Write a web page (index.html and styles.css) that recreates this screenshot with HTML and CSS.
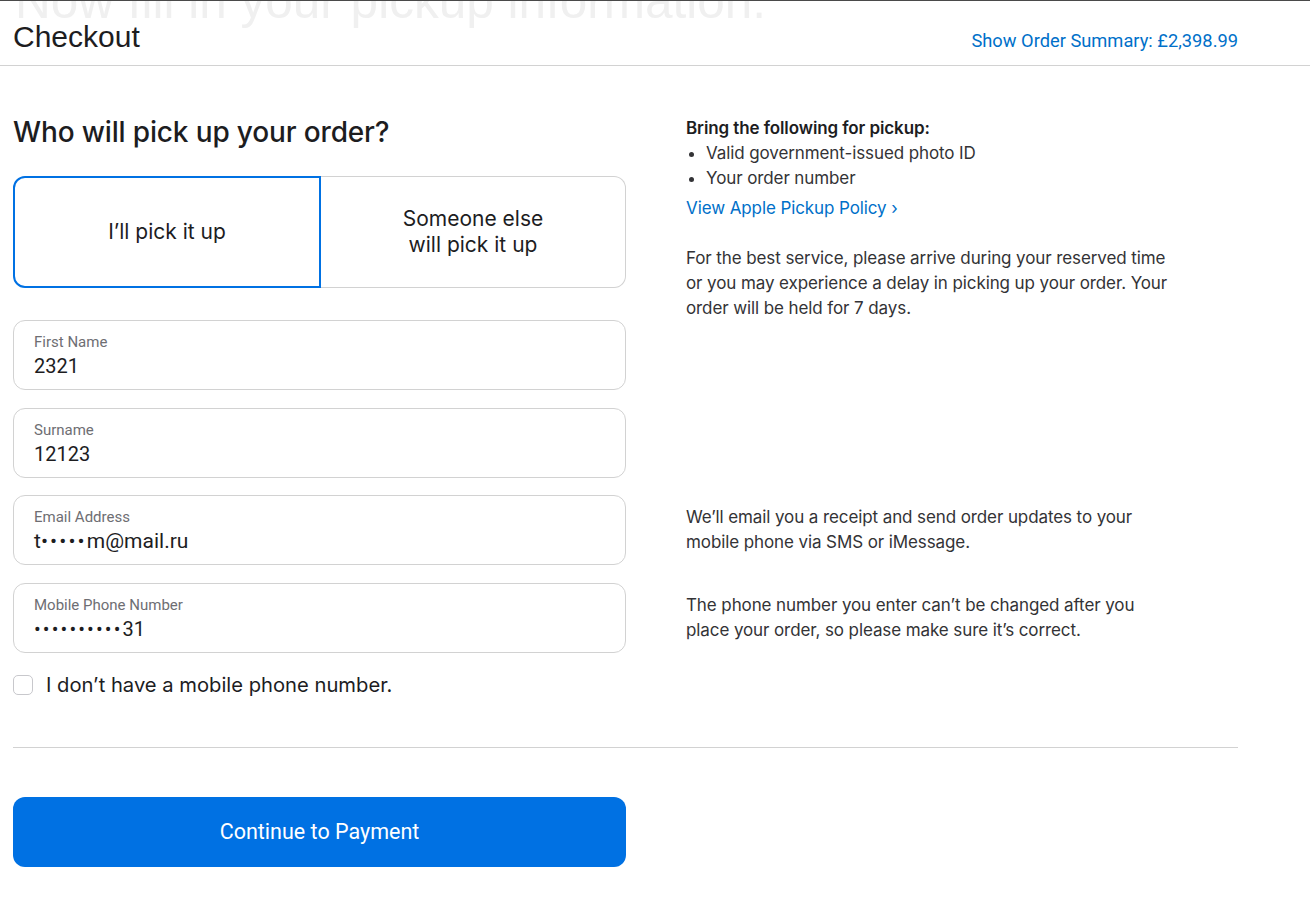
FILE: index.html
```html
<!DOCTYPE html>
<html lang="en">
<head>
<meta charset="utf-8">
<title>Checkout</title>
<link rel="stylesheet" href="styles.css">
</head>
<body>
<header class="topbar">
  <div class="ghost-title">Now fill in your pickup information.</div>
  <h1 class="brand">Checkout</h1>
  <a class="summary-link" href="#">Show Order Summary: £2,398.99</a>
</header>
<main class="checkout">
  <section class="pick-block">
    <h2 class="section-title">Who will pick up your order?</h2>
    <div class="toggle">
      <div class="toggle-opt is-selected">I’ll pick it up</div>
      <div class="toggle-opt">Someone else<br>will pick it up</div>
    </div>
  </section>
  <aside class="pickup-info">
    <p class="info-title">Bring the following for pickup:</p>
    <ul class="info-list">
      <li>Valid government-issued photo ID</li>
      <li>Your order number</li>
    </ul>
    <a class="info-link" href="#">View Apple Pickup Policy ›</a>
    <p class="info-text">For the best service, please arrive during your reserved time or you may experience a delay in picking up your order. Your order will be held for 7 days.</p>
  </aside>
  <div class="field field-first">
    <span class="field-label">First Name</span>
    <span class="field-value">2321</span>
  </div>
  <div class="field">
    <span class="field-label">Surname</span>
    <span class="field-value">12123</span>
  </div>
  <div class="field field-left">
    <span class="field-label">Email Address</span>
    <span class="field-value field-email">t<span class="mask">•••••</span>m@mail.ru</span>
  </div>
  <p class="note">We’ll email you a receipt and send order updates to your mobile phone via SMS or iMessage.</p>
  <div class="field field-left">
    <span class="field-label">Mobile Phone Number</span>
    <span class="field-value"><span class="mask">••••••••••</span>31</span>
  </div>
  <p class="note">The phone number you enter can’t be changed after you place your order, so please make sure it’s correct.</p>
  <label class="check-row">
    <span class="checkbox"></span>
    <span class="check-text">I don’t have a mobile phone number.</span>
  </label>
  <hr class="divider">
  <button class="pay-btn" type="button">Continue to Payment</button>
</main>
</body>
</html>
```
FILE: styles.css
```css
* { box-sizing: border-box; }
html, body { margin: 0; padding: 0; background: #fff; }
body {
  border-top: 1px solid #4a4a4a;
  font-family: "Inter", "Liberation Sans", sans-serif;
  color: #1d1d1f;
  overflow: hidden;
}
.topbar {
  position: relative;
  height: 65px;
  border-bottom: 1px solid #d2d2d2;
  padding: 19px 72px 0 13px;
  display: flex;
  justify-content: space-between;
  align-items: baseline;
}
.ghost-title {
  position: absolute;
  left: 15px;
  top: -29px;
  font-family: "Liberation Sans", sans-serif;
  font-size: 49.5px;
  color: #f0f0f0;
  white-space: nowrap;
  pointer-events: none;
}
.brand {
  position: relative;
  margin: 0;
  font-family: "Liberation Sans", sans-serif;
  font-weight: 400;
  font-size: 30px;
  line-height: 34px;
  color: #1d1d1f;
}
.summary-link {
  position: relative;
  font-family: "Roboto", "Liberation Sans", sans-serif;
  font-size: 18.3px;
  color: #0070c9;
  text-decoration: none;
}
.checkout {
  display: grid;
  grid-template-columns: 613px 1fr;
  column-gap: 60px;
  padding: 50px 72px 0 13px;
  align-items: start;
}
.pick-block { grid-column: 1; grid-row: 1; }
.section-title {
  margin: 0;
  font-size: 28px;
  font-weight: 500;
  line-height: 32px;
  letter-spacing: -0.15px;
  color: #1d1d1f;
}
.toggle {
  display: flex;
  margin-top: 28px;
  height: 112px;
}
.toggle-opt {
  flex: 1;
  display: flex;
  align-items: center;
  justify-content: center;
  text-align: center;
  font-size: 21px;
  line-height: 26px;
  color: #1d1d1f;
  border: 1px solid #d2d2d2;
  border-left: none;
  border-radius: 0 12px 12px 0;
}
.toggle-opt.is-selected {
  border: 2px solid #0071e3;
  border-radius: 12px 0 0 12px;
}
.pickup-info {
  grid-column: 2;
  grid-row: 1 / span 3;
  font-size: 17px;
  line-height: 25px;
  letter-spacing: -0.1px;
  color: #333336;
  max-width: 490px;
}
.info-title { margin: 0; font-weight: 600; color: #1d1d1f; }
.info-list { margin: 0; padding-left: 20px; }
.info-link {
  display: inline-block;
  margin-top: 5px;
  color: #0070c9;
  text-decoration: none;
}
.info-text { margin: 25px 0 0; }
.field {
  grid-column: 1;
  height: 70px;
  margin-top: 17.5px;
  border: 1px solid #d2d2d2;
  border-radius: 12px;
  padding: 12px 20px 0;
  display: flex;
  flex-direction: column;
}
.field-first { margin-top: 32px; }
.field-label {
  font-family: "Roboto", "Liberation Sans", sans-serif;
  font-size: 15px;
  line-height: 18px;
  color: #6e6e73;
}
.field-value {
  margin-top: 3px;
  font-family: "Roboto", "Liberation Sans", sans-serif;
  font-size: 20px;
  line-height: 24px;
  color: #1d1d1f;
}
.field-email { font-size: 21px; }
.mask {
  letter-spacing: 2.1px;
}
.note {
  grid-column: 2;
  margin: 18.5px 0 0;
  padding-top: 9px;
  font-size: 17px;
  line-height: 25px;
  letter-spacing: -0.1px;
  color: #333336;
  max-width: 490px;
}
.check-row {
  grid-column: 1;
  margin-top: 20px;
  display: flex;
  align-items: center;
  gap: 13px;
}
.checkbox {
  width: 20px;
  height: 20px;
  border: 1px solid #c8c8cc;
  border-radius: 5px;
  flex: none;
}
.check-text {
  font-size: 20.2px;
  line-height: 24px;
  color: #1d1d1f;
}
.divider {
  grid-column: 1 / -1;
  margin: 50px 0 0;
  border: none;
  border-top: 1px solid #d2d2d2;
  height: 0;
}
.pay-btn {
  grid-column: 1;
  margin-top: 49px;
  height: 70px;
  border: none;
  border-radius: 12px;
  background: #0071e3;
  color: #fff;
  font-family: "Roboto", "Liberation Sans", sans-serif;
  font-size: 21.5px;
  cursor: pointer;
}
```
